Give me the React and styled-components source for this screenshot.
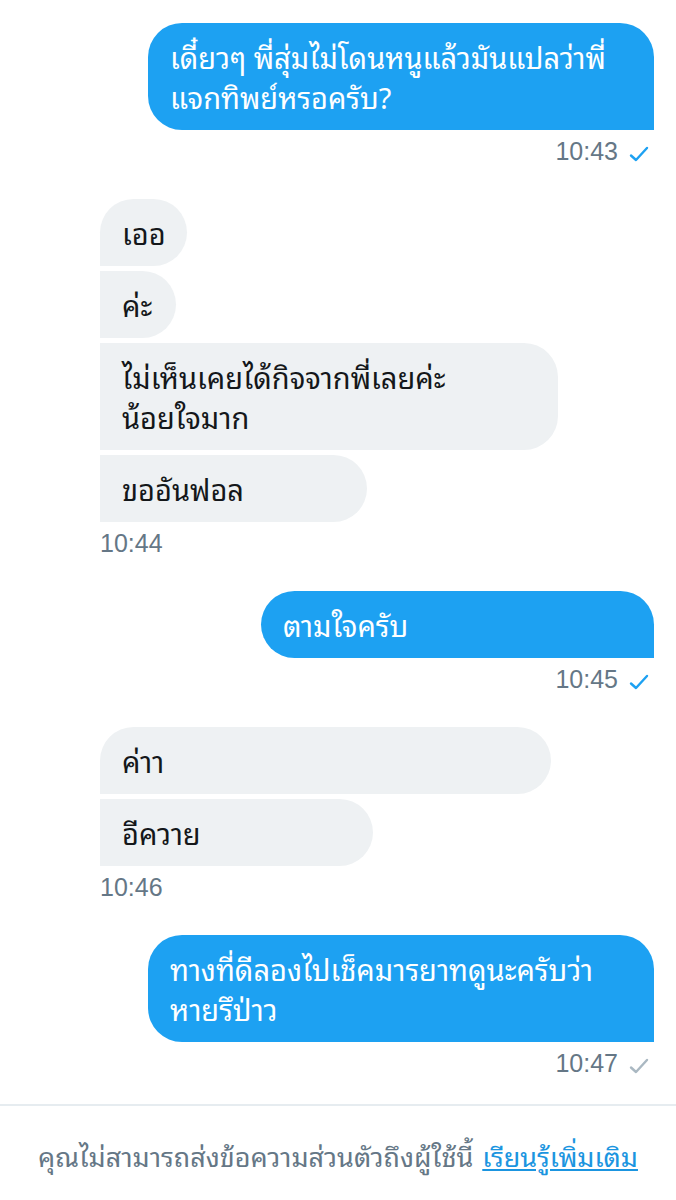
import React from "react";
import styled, { createGlobalStyle } from "styled-components";

const Global = createGlobalStyle`
  html, body { margin: 0; padding: 0; background: #ffffff; }
  body { font-family: "Noto Sans Thai Looped", "Noto Sans", "Noto Sans Thai", "Liberation Sans", sans-serif; }
`;

const Page = styled.div`
  width: 676px;
  display: flex;
  flex-direction: column;
`;

const Thread = styled.div`
  display: flex;
  flex-direction: column;
  padding: 23px 22px 27px 100px;
  gap: 34px;
`;

const Group = styled.div`
  display: flex;
  flex-direction: column;
  align-items: ${(p) => (p.$mine ? "flex-end" : "flex-start")};
  gap: 5px;
`;

const Bubble = styled.div`
  box-sizing: border-box;
  width: ${(p) => p.$w}px;
  padding: 13px 20px 14px 22px;
  font-size: 29px;
  line-height: 40px;
  white-space: pre;
  color: ${(p) => (p.$mine ? "#ffffff" : "#14171a")};
  background: ${(p) => (p.$mine ? "#1da1f2" : "#eef1f3")};
  border-radius: ${(p) =>
    p.$mine
      ? "34px 34px 0 34px"
      : p.$first
      ? "34px 34px 34px 0"
      : "0 34px 34px 0"};
`;

const Meta = styled.div`
  display: flex;
  align-items: center;
  gap: 11px;
  margin-top: 2px;
  padding-right: ${(p) => (p.$mine ? 5 : 0)}px;
  height: 28px;
  font-family: "Liberation Sans", Arial, sans-serif;
  font-size: 25px;
  color: #657786;
`;

const Check = ({ read }) => (
  <svg width="20" height="16" viewBox="0 0 20 16" style={{ marginTop: 6 }}>
    <path
      d="M2 9.5 L7 14 L18 2"
      fill="none"
      stroke={read ? "#1da1f2" : "#aab8c2"}
      strokeWidth="2.4"
      strokeLinecap="round"
      strokeLinejoin="round"
    />
  </svg>
);

const Footer = styled.div`
  border-top: 2px solid #e6ecf0;
  height: 96px;
  display: flex;
  align-items: center;
  justify-content: center;
  font-size: 27px;
  color: #657786;
  white-space: nowrap;
`;

const Link = styled.a`
  color: #1b95e0;
  text-decoration: underline;
  margin-left: 9px;
`;

const Mine = ({ text, w, time, read }) => (
  <Group $mine>
    <Bubble $mine $w={w}>
      {text}
    </Bubble>
    <Meta $mine>
      {time}
      <Check read={read} />
    </Meta>
  </Group>
);

const Theirs = ({ items, time }) => (
  <Group>
    {items.map((it, i) => (
      <Bubble key={i} $first={i === 0} $w={it.w}>
        {it.text}
      </Bubble>
    ))}
    <Meta>{time}</Meta>
  </Group>
);

export default function App() {
  return (
    <Page>
      <Global />
      <Thread>
        <Mine
          w={506}
          text={"เดี๋ยวๆ พี่สุ่มไม่โดนหนูแล้วมันแปลว่าพี่\nแจกทิพย์หรอครับ?"}
          time="10:43"
          read
        />
        <Theirs
          time="10:44"
          items={[
            { w: 87, text: "เออ" },
            { w: 76, text: "ค่ะ" },
            { w: 458, text: "ไม่เห็นเคยได้กิจจากพี่เลยค่ะ\nน้อยใจมาก" },
            { w: 267, text: "ขออันฟอล" },
          ]}
        />
        <Mine w={393} text="ตามใจครับ" time="10:45" read />
        <Theirs
          time="10:46"
          items={[
            { w: 451, text: "ค่าา" },
            { w: 273, text: "อีควาย" },
          ]}
        />
        <Mine
          w={506}
          text={"ทางที่ดีลองไปเช็คมารยาทดูนะครับว่า\nหายรึป่าว"}
          time="10:47"
        />
      </Thread>
      <Footer>
        คุณไม่สามารถส่งข้อความส่วนตัวถึงผู้ใช้นี้
        <Link href="#">เรียนรู้เพิ่มเติม</Link>
      </Footer>
    </Page>
  );
}
